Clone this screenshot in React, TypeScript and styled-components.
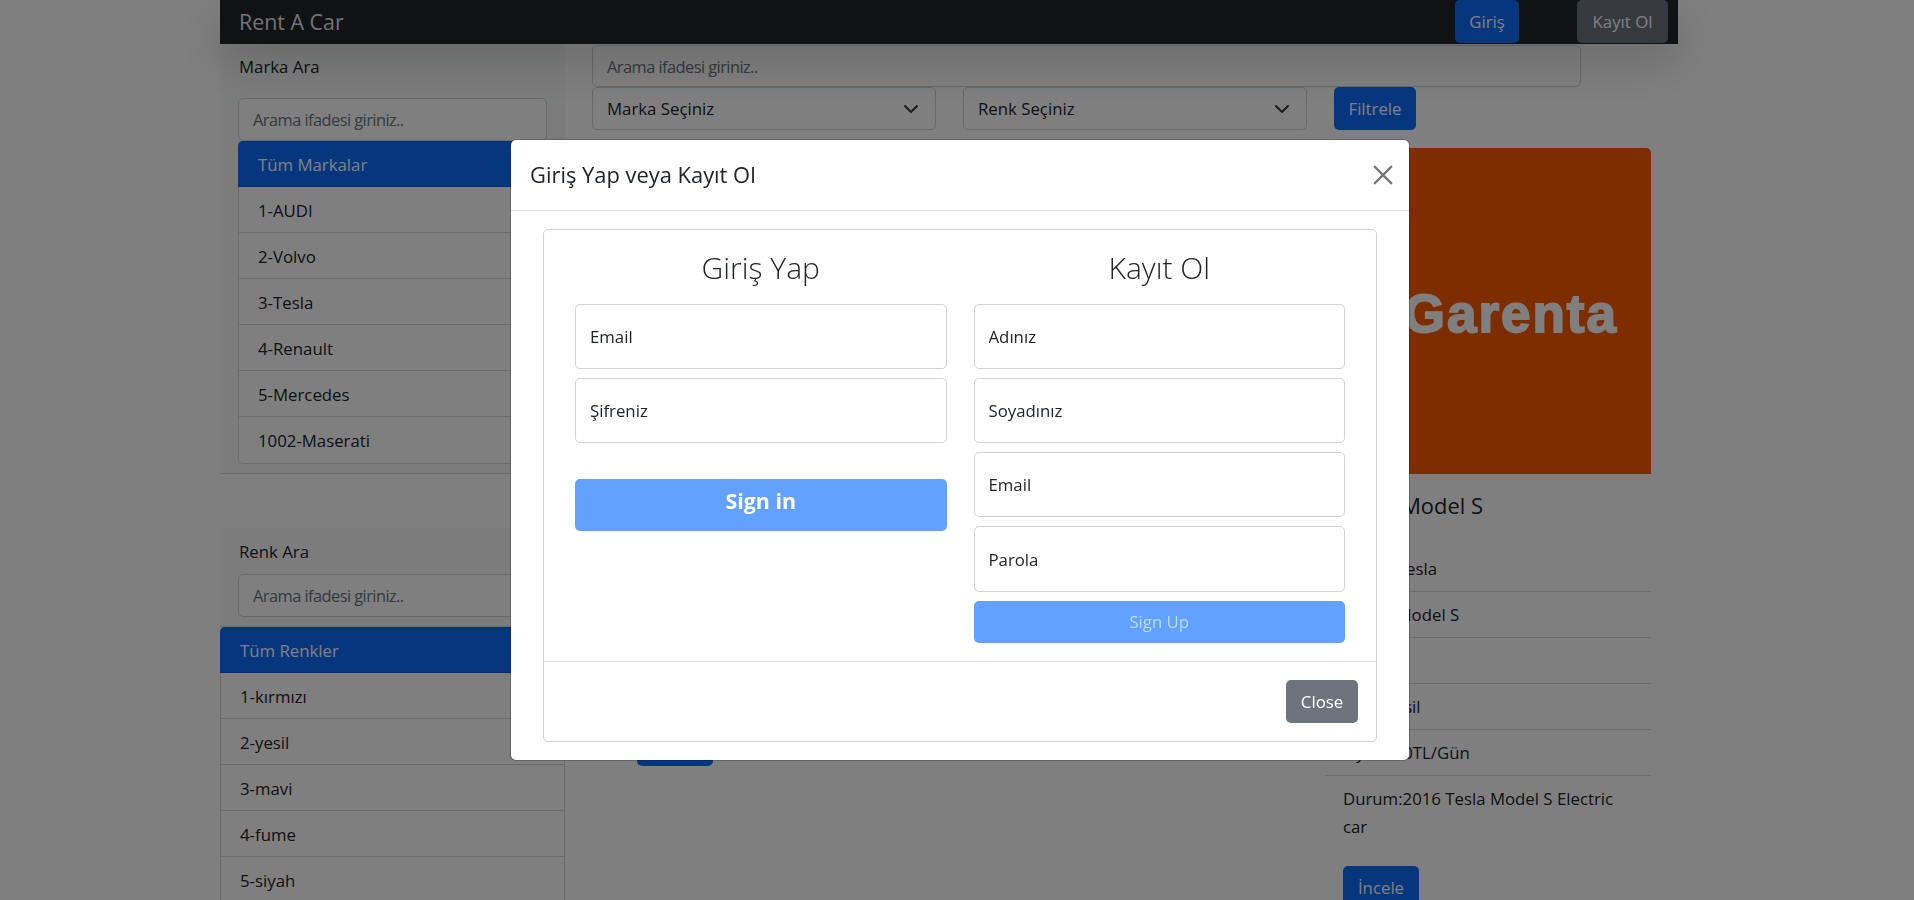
import React from "react";
import styled, { createGlobalStyle } from "styled-components";

const GlobalStyle = createGlobalStyle`
   * {
      box-sizing: border-box;
   }
   html, body {
      margin: 0;
      height: 100%;
      overflow: hidden;
      background: #fff;
      color: #212529;
      font-family: "Open Sans", "Noto Sans", sans-serif;
      font-size: 16.8px;
      line-height: 28px;
   }
   input::placeholder {
      color: #6c757d;
      opacity: 1;
   }
`;

const brands = ["1-AUDI", "2-Volvo", "3-Tesla", "4-Renault", "5-Mercedes", "1002-Maserati"];
const colors = ["1-kırmızı", "2-yesil", "3-mavi", "4-fume", "5-siyah"];

type CarCard = {
   title: string;
   imageHeight: number;
   imageColor: string;
   logo?: string;
   rows: Array<string>;
};

const cars: Array<CarCard> = [
   {
      title: "Audi A4",
      imageHeight: 211,
      imageColor: "#ddd",
      rows: ["Marka:AUDI", "Model:A4", "Yıl:2018", "Renk:siyah", "Fiyat:250TL/Gün", "Durum:2018 Audi A4"],
   },
   {
      title: "Volvo S60",
      imageHeight: 180,
      imageColor: "#ccc",
      rows: ["Marka:Volvo", "Model:S60", "Yıl:2019", "Renk:mavi", "Fiyat:200TL/Gün", "Durum:2019 Volvo S60"],
   },
   {
      title: "Tesla Model S",
      imageHeight: 326,
      imageColor: "#fc5a00",
      logo: "Garenta",
      rows: ["Marka:Tesla", "Model:Model S", "Yıl:2016", "Renk:yesil", "Fiyat:300TL/Gün", "Durum:2016 Tesla Model S Electric car"],
   },
];

export default function App() {
   return (
      <>
         <GlobalStyle />
         <Page>
            <Navbar>
               <Brand>Rent A Car</Brand>
               <NavButton $bg="#0d6efd" $width={64}>Giriş</NavButton>
               <NavButton $bg="#6c757d" $width={91}>Kayıt Ol</NavButton>
            </Navbar>

            <Content>
               <Sidebar>
                  <BrandPanel>
                     <PanelLabel>Marka Ara</PanelLabel>
                     <SearchInput placeholder="Arama ifadesi giriniz.." />
                     <ListGroup>
                        <ListItem $active>Tüm Markalar</ListItem>
                        {brands.map((brand) => (
                           <ListItem key={brand}>{brand}</ListItem>
                        ))}
                     </ListGroup>
                  </BrandPanel>

                  <ColorPanel>
                     <PanelLabel>Renk Ara</PanelLabel>
                     <SearchInput placeholder="Arama ifadesi giriniz.." />
                  </ColorPanel>
                  <ListGroup>
                     <ListItem $active>Tüm Renkler</ListItem>
                     {colors.map((color) => (
                        <ListItem key={color}>{color}</ListItem>
                     ))}
                  </ListGroup>
               </Sidebar>

               <Main>
                  <TopSearch placeholder="Arama ifadesi giriniz.." />
                  <FilterRow>
                     <SelectBox>
                        <span>Marka Seçiniz</span>
                        <Chevron />
                     </SelectBox>
                     <SelectBox>
                        <span>Renk Seçiniz</span>
                        <Chevron />
                     </SelectBox>
                     <PrimaryButton $width={82}>Filtrele</PrimaryButton>
                  </FilterRow>

                  <CardGrid>
                     {cars.map((car) => (
                        <Card key={car.title}>
                           <CardImage $height={car.imageHeight} $color={car.imageColor}>
                              {car.logo && <LogoText>{car.logo}</LogoText>}
                           </CardImage>
                           <CardTitle>{car.title}</CardTitle>
                           {car.rows.map((row) => (
                              <CardRow key={row}>{row}</CardRow>
                           ))}
                           <CardAction>
                              <PrimaryButton $width={76}>İncele</PrimaryButton>
                           </CardAction>
                        </Card>
                     ))}
                  </CardGrid>
               </Main>
            </Content>
         </Page>

         <Backdrop />

         <Modal>
            <ModalHeader>
               <ModalTitle>Giriş Yap veya Kayıt Ol</ModalTitle>
               <CloseIcon viewBox="0 0 18 18" aria-label="Close">
                  <path d="M1 1l16 16M17 1L1 17" />
               </CloseIcon>
            </ModalHeader>
            <ModalBody>
               <AuthBox>
                  <AuthColumns>
                     <AuthColumn>
                        <AuthHeading>Giriş Yap</AuthHeading>
                        <AuthInput placeholder="Email" />
                        <AuthInput placeholder="Şifreniz" />
                        <SignInButton>Sign in</SignInButton>
                     </AuthColumn>
                     <AuthColumn>
                        <AuthHeading>Kayıt Ol</AuthHeading>
                        <AuthInput placeholder="Adınız" />
                        <AuthInput placeholder="Soyadınız" />
                        <AuthInput placeholder="Email" />
                        <AuthInput placeholder="Parola" $height={66} />
                        <SignUpButton>Sign Up</SignUpButton>
                     </AuthColumn>
                  </AuthColumns>
                  <AuthFooter>
                     <CloseButton>Close</CloseButton>
                  </AuthFooter>
               </AuthBox>
            </ModalBody>
         </Modal>
      </>
   );
}

function Chevron() {
   return (
      <ChevronIcon viewBox="0 0 16 16">
         <path d="M2 5l6 6 6-6" />
      </ChevronIcon>
   );
}

const Page = styled.div`
   width: 1458px;
   height: 900px;
   margin-left: 220px;
`;

const Navbar = styled.nav`
   position: relative;
   z-index: 2;
   display: flex;
   align-items: flex-start;
   height: 44px;
   padding: 0 10px 0 19px;
   background: #212529;
   box-shadow: 0 16px 48px rgba(0, 0, 0, 0.175);
`;

const Brand = styled.div`
   flex: 1;
   font-size: 21.4px;
   line-height: 44px;
   color: rgba(255, 255, 255, 0.9);
`;

const NavButton = styled.button<{ $bg: string; $width: number }>`
   width: ${(p) => p.$width}px;
   height: 43px;
   margin-left: 58px;
   padding: 0;
   border: 0;
   border-radius: 5px;
   background: ${(p) => p.$bg};
   color: #fff;
   font: inherit;
`;

const Content = styled.div`
   display: flex;
   align-items: flex-start;
`;

const Sidebar = styled.aside`
   flex: 0 0 345px;
`;

const BrandPanel = styled.div`
   height: 430px;
   margin-bottom: 54px;
   padding: 9px 18px 0;
   background: #f8f9fa;
   border-bottom: 1px solid rgba(0, 0, 0, 0.15);
`;

const ColorPanel = styled.div`
   height: 99px;
   padding: 10px 18px 0;
   background: #f8f9fa;
   border-bottom: 1px solid rgba(0, 0, 0, 0.15);
   border-radius: 5px 5px 0 0;
`;

const PanelLabel = styled.div`
   height: 28px;
   padding-left: 1px;
`;

const SearchInput = styled.input`
   display: block;
   width: 100%;
   height: 43px;
   margin: 17px 0 0;
   padding: 0 14px;
   background: #fff;
   border: 1px solid #ced4da;
   border-radius: 5px;
   font: inherit;
   font-size: 16.4px;
   letter-spacing: -0.55px;

   ${ColorPanel} & {
      margin-top: 8px;
   }
`;

const ListGroup = styled.div`
   display: flex;
   flex-direction: column;
   background: #fff;
   border: 1px solid rgba(0, 0, 0, 0.15);
   border-top: 0;
   border-radius: 5px;
`;

const ListItem = styled.div<{ $active?: boolean }>`
   height: 46px;
   padding: 10px ${(p) => (p.$active ? "20px" : "19px")} 0;
   margin: ${(p) => (p.$active ? "0 -1px" : "0")};
   background: ${(p) => (p.$active ? "#0d6efd" : "transparent")};
   color: ${(p) => (p.$active ? "#fff" : "#212529")};
   border-bottom: 1px solid rgba(0, 0, 0, 0.15);
   border-radius: ${(p) => (p.$active ? "5px 5px 0 0" : "0")};

   &:last-child {
      border-bottom: 0;
   }
`;

const Main = styled.main`
   flex: 1;
   margin-left: 27px;
   padding-top: 1px;
`;

const TopSearch = styled.input`
   display: block;
   width: 989px;
   height: 42px;
   padding: 0 14px;
   background: #fff;
   border: 1px solid #ced4da;
   border-radius: 5px;
   font: inherit;
   font-size: 16.4px;
   letter-spacing: -0.55px;
`;

const FilterRow = styled.div`
   display: flex;
   align-items: flex-start;
   gap: 27px;
`;

const SelectBox = styled.div`
   display: flex;
   align-items: center;
   justify-content: space-between;
   width: 344px;
   height: 43px;
   padding: 0 16px 0 14px;
   background: #fff;
   border: 1px solid #ced4da;
   border-radius: 5px;
`;

const ChevronIcon = styled.svg`
   width: 16px;
   height: 16px;
   fill: none;
   stroke: #343a40;
   stroke-width: 2;
   stroke-linecap: round;
   stroke-linejoin: round;
`;

const PrimaryButton = styled.button<{ $width: number }>`
   width: ${(p) => p.$width}px;
   height: 43px;
   padding: 0;
   background: #0d6efd;
   border: 0;
   border-radius: 5px;
   color: #fff;
   font: inherit;
`;

const CardGrid = styled.div`
   display: grid;
   grid-template-columns: 328px 326px 326px;
   gap: 26px;
   align-items: start;
   margin-top: 18px;
   padding-left: 27px;
`;

const Card = styled.article`
   display: flex;
   flex-direction: column;
`;

const CardImage = styled.div<{ $height: number; $color: string }>`
   display: flex;
   align-items: center;
   justify-content: flex-end;
   height: ${(p) => p.$height}px;
   padding-right: 33px;
   background: ${(p) => p.$color};
   border-radius: 5px 5px 0 0;
`;

const LogoText = styled.span`
   margin-top: 6px;
   font-family: "Liberation Sans", Arial, sans-serif;
   font-size: 53px;
   font-weight: 700;
   line-height: 60px;
   letter-spacing: 2px;
   color: #fff;
   -webkit-text-stroke: 1.8px #fff;
   filter: blur(0.7px);
`;

const CardTitle = styled.h5`
   height: 72px;
   margin: 0;
   padding: 16px 18px 0;
   font-size: 21.9px;
   font-weight: 500;
   line-height: 32px;
`;

const CardRow = styled.div`
   padding: 9px 18px 8px;
   border-bottom: 1px solid rgba(0, 0, 0, 0.15);

   &:nth-last-child(2) {
      border-bottom: 0;
   }
`;

const CardAction = styled.div`
   padding: 17px 18px 0;
`;

const Backdrop = styled.div`
   position: fixed;
   inset: 0;
   z-index: 5;
   background: #000;
   opacity: 0.5;
`;

const Modal = styled.div`
   position: fixed;
   z-index: 6;
   top: 139px;
   left: 510px;
   width: 900px;
   height: 622px;
   background: #fff;
   border: 1px solid rgba(0, 0, 0, 0.2);
   border-radius: 6px;
   background-clip: padding-box;
`;

const ModalHeader = styled.header`
   display: flex;
   align-items: center;
   justify-content: space-between;
   height: 71px;
   padding: 0 16px 0 19px;
   border-bottom: 1px solid #dee2e6;
`;

const ModalTitle = styled.h5`
   margin: 0;
   font-size: 21.9px;
   font-weight: 500;
   line-height: 32px;
`;

const CloseIcon = styled.svg`
   width: 20px;
   height: 20px;
   fill: none;
   stroke: #777;
   stroke-width: 2;
`;

const ModalBody = styled.div`
   padding: 18px 32px;
`;

const AuthBox = styled.section`
   height: 513px;
   background: #fff;
   border: 1px solid #ced0d3;
   border-radius: 5px;
`;

const AuthColumns = styled.div`
   display: grid;
   grid-template-columns: 1fr 1fr;
   gap: 27px;
   height: 432px;
   padding: 0 31px;
   border-bottom: 1px solid #dee2e6;
`;

const AuthColumn = styled.div`
   display: flex;
   flex-direction: column;
   gap: 9px;
`;

const AuthHeading = styled.h2`
   height: 65px;
   margin: 0;
   font-size: 30px;
   font-weight: 300;
   line-height: 76px;
   text-align: center;
`;

const AuthInput = styled.input<{ $height?: number }>`
   display: block;
   width: 100%;
   height: ${(p) => p.$height ?? 65}px;
   padding: 0 14px;
   background: #fff;
   border: 1px solid #ced4da;
   border-radius: 5px;
   font: inherit;

   &::placeholder {
      color: #212529;
   }
`;

const SignInButton = styled.button`
   height: 52px;
   margin-top: 27px;
   padding: 0 0 8px;
   background: #62a1ff;
   border: 0;
   border-radius: 5px;
   color: #fff;
   font: inherit;
   font-size: 21.4px;
   font-weight: 700;
`;

const SignUpButton = styled.button`
   height: 42px;
   padding: 0;
   background: #62a1ff;
   border: 0;
   border-radius: 5px;
   color: #b5dcff;
   font: inherit;
`;

const AuthFooter = styled.footer`
   display: flex;
   justify-content: flex-end;
   padding: 18px;
`;

const CloseButton = styled.button`
   width: 72px;
   height: 43px;
   padding: 0;
   background: #6c757d;
   border: 0;
   border-radius: 5px;
   color: #fff;
   font: inherit;
`;
